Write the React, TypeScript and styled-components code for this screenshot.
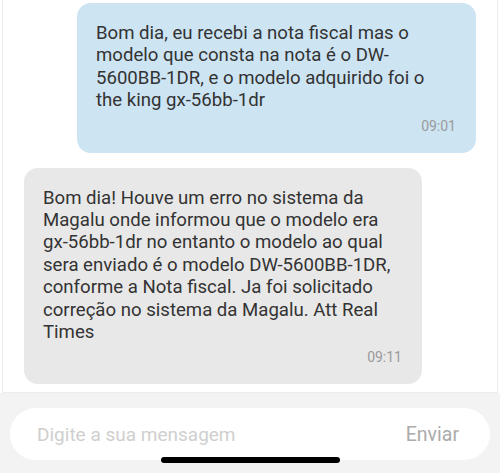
import * as React from 'react';
import styled, { createGlobalStyle } from 'styled-components';

//#######
// Style
//#######
const GlobalStyle = createGlobalStyle`
  html, body {
    margin: 0;
    padding: 0;
    background: #ffffff;
  }
  body {
    font-family: Roboto, "Noto Sans", sans-serif;
    -webkit-font-smoothing: antialiased;
  }
`;

const Screen = styled.div`
  width: 500px;
  height: 473px;
  display: flex;
  flex-direction: column;
  position: relative;
  overflow: hidden;
  background: #ffffff;
`;

const ChatArea = styled.div`
  flex: 1;
  margin: 0 2px;
  border-left: 1px solid #ededed;
  border-right: 1px solid #ededed;
  border-bottom: 1px solid #ececec;
  display: flex;
  flex-direction: column;
  gap: 15px;
  padding: 3px 21px 0 21px;
`;

const Bubble = styled.div<{ $mine?: boolean }>`
  align-self: ${(p) => (p.$mine ? 'flex-end' : 'flex-start')};
  width: ${(p) => (p.$mine ? '399px' : '398px')};
  box-sizing: border-box;
  background: ${(p) => (p.$mine ? '#cde4f3' : '#e8e8e8')};
  border-radius: 14px;
  padding: 19px 20px 19px 19px;
  color: #333333;
`;

const BubbleText = styled.p`
  margin: 0 4px 0 0;
  font-size: 18.6px;
  line-height: 22.4px;
`;

const Time = styled.div`
  text-align: right;
  font-size: 14px;
  line-height: 16px;
  color: #9a9a9a;
  margin-top: 6px;
`;

const Footer = styled.div`
  height: 80px;
  background: #f3f3f3;
  padding: 15px 10px 0 10px;
  box-sizing: border-box;
`;

const InputPill = styled.div`
  height: 52px;
  border-radius: 26px;
  background: #ffffff;
  display: flex;
  align-items: center;
  justify-content: space-between;
  padding: 0 31px 0 27px;
`;

const Placeholder = styled.span`
  font-size: 19px;
  color: #cfcfcf;
`;

const SendLabel = styled.span`
  font-size: 19.5px;
  color: #ababab;
`;

const HomeIndicator = styled.div`
  position: absolute;
  left: 161px;
  bottom: 10px;
  width: 179px;
  height: 6px;
  border-radius: 3px;
  background: #000000;
`;

//#####
// App
//#####
const App = () => {
  return (
    <Screen>
      <GlobalStyle />
      <ChatArea>
        <Bubble $mine>
          <BubbleText>
            Bom dia, eu recebi a nota fiscal mas o modelo que consta na nota é o DW-5600BB-1DR, e o
            modelo adquirido foi o the king gx-56bb-1dr
          </BubbleText>
          <Time>09:01</Time>
        </Bubble>
        <Bubble>
          <BubbleText>
            Bom dia! Houve um erro no sistema da Magalu onde informou que o modelo era gx-56bb-1dr no
            entanto o modelo ao qual sera enviado é o modelo DW-5600BB-1DR, conforme a Nota fiscal. Ja
            foi solicitado correção no sistema da Magalu. Att Real Times
          </BubbleText>
          <Time>09:11</Time>
        </Bubble>
      </ChatArea>
      <Footer>
        <InputPill>
          <Placeholder>Digite a sua mensagem</Placeholder>
          <SendLabel>Enviar</SendLabel>
        </InputPill>
      </Footer>
      <HomeIndicator />
    </Screen>
  );
};

export default App;
